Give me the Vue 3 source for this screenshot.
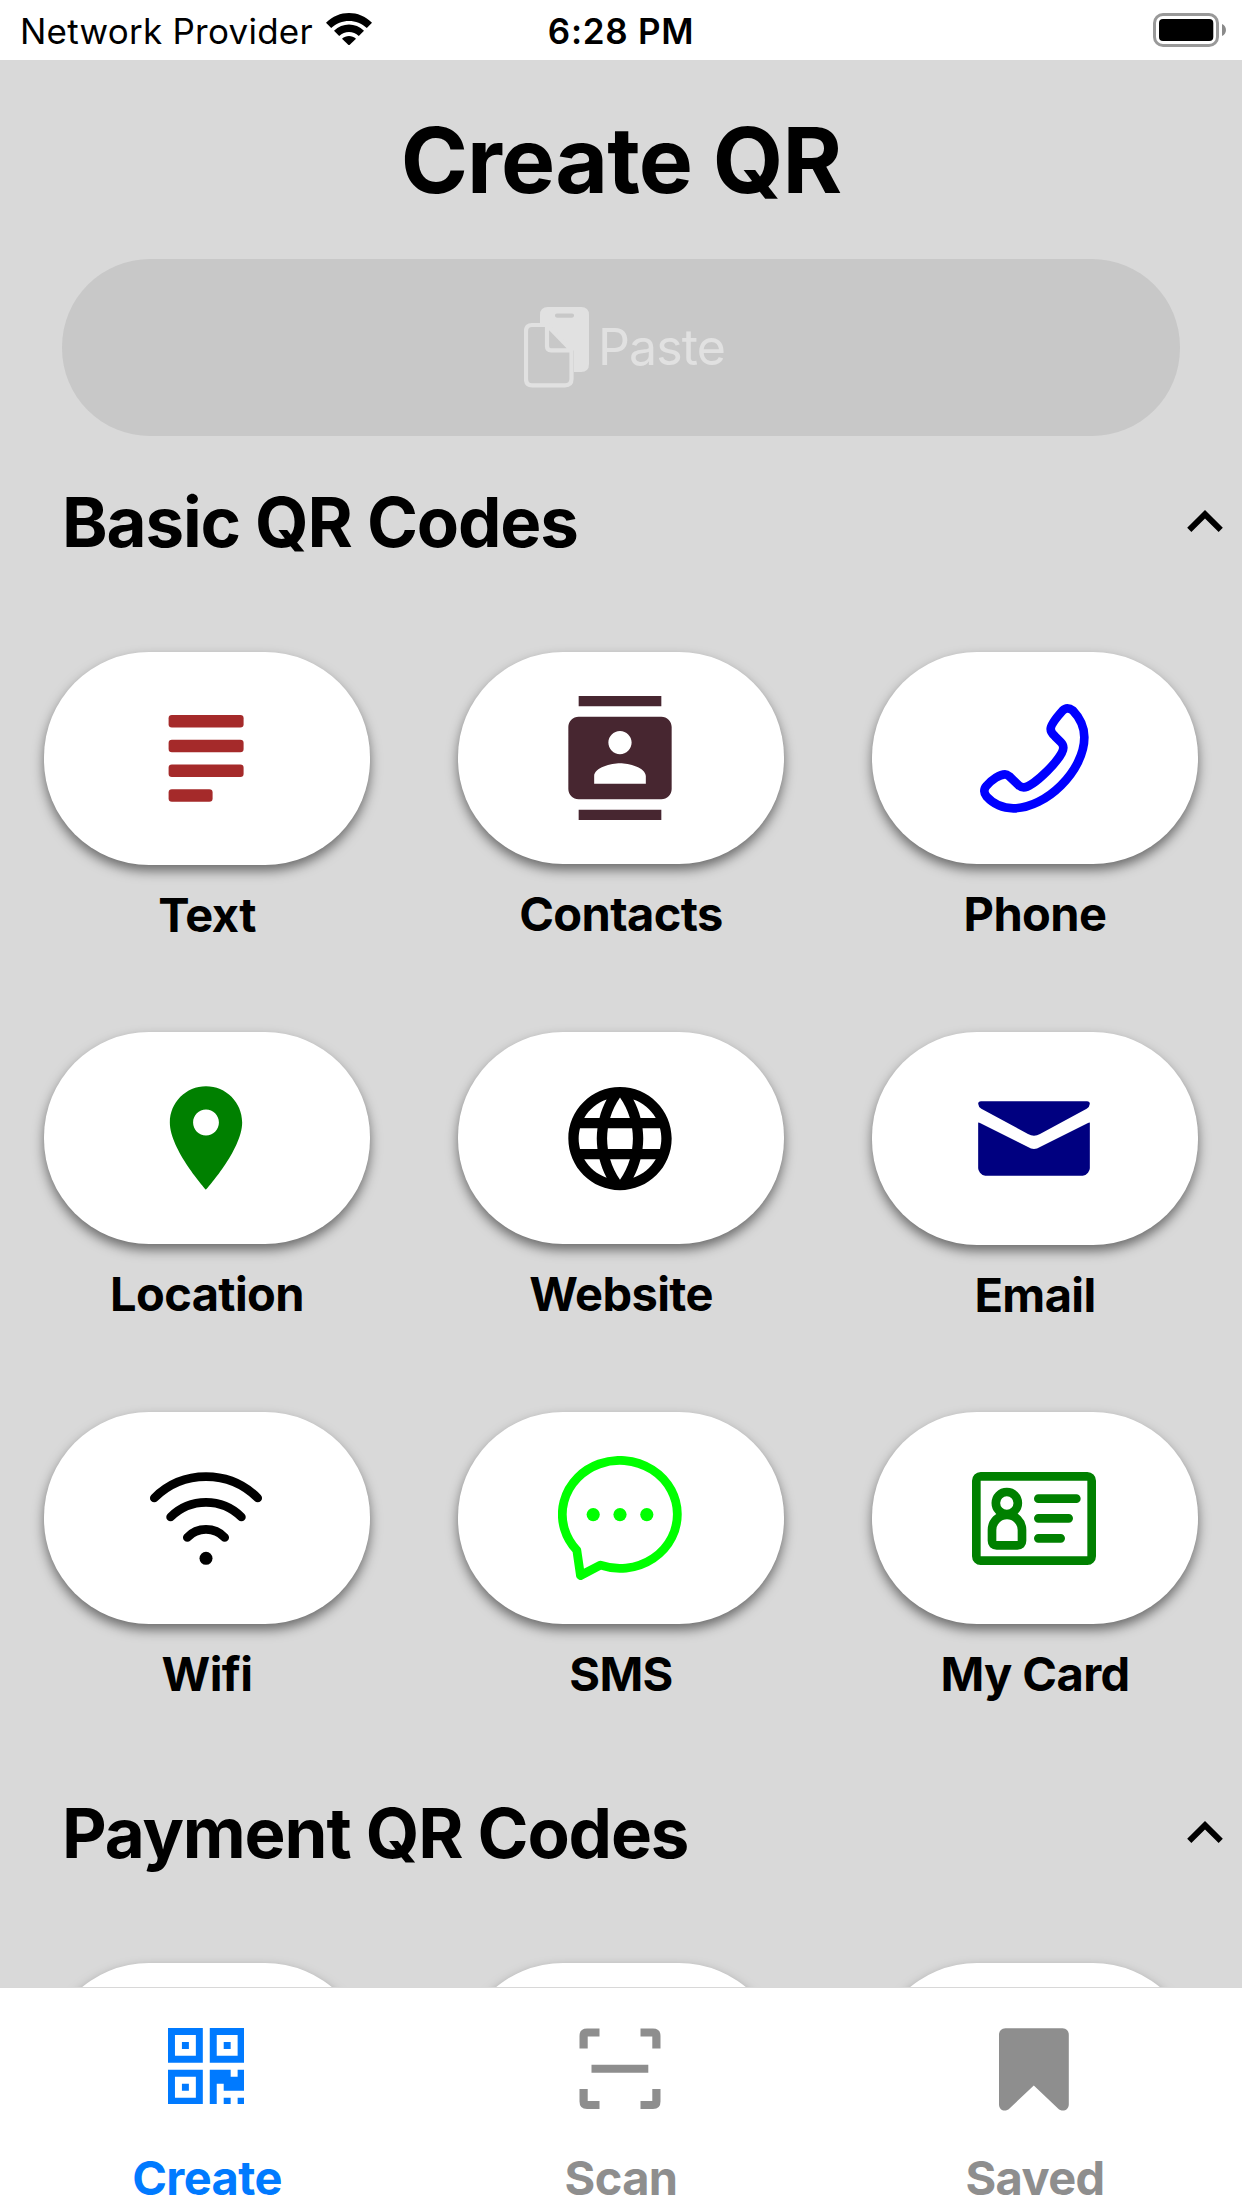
<script setup>
const basicItems = [
  { id: 'text', label: 'Text' },
  { id: 'contacts', label: 'Contacts' },
  { id: 'phone', label: 'Phone' },
  { id: 'location', label: 'Location' },
  { id: 'website', label: 'Website' },
  { id: 'email', label: 'Email' },
  { id: 'wifi', label: 'Wifi' },
  { id: 'sms', label: 'SMS' },
  { id: 'card', label: 'My Card' },
]
</script>

<template>
  <div class="screen">
    <header class="status">
      <div class="carrier">
        <span class="carrier-name">Network Provider</span>
        <svg class="signal" viewBox="0 0 46 32">
          <path d="M0 9.8C13-3.2 33-3.2 46 9.8L40.800 15C31 5.500 15 5.500 5.200 15Z" />
          <path d="M8 17.800C16.500 9.400 29.500 9.400 38 17.800L32.800 23C27.300 17.600 18.700 17.600 13.200 23Z" />
          <path d="M16 25.700C20 22 26 22 30 25.700L23 32.500Z" />
        </svg>
      </div>
      <div class="time">6:28 PM</div>
      <div class="battery-wrap">
        <svg class="battery" viewBox="0 0 74 34">
          <rect x="1.500" y="1.500" width="63" height="31" rx="8.500" fill="none" stroke="#999" stroke-width="3" />
          <rect x="6" y="6" width="54.300" height="22" rx="4" />
          <path d="M69 11C74.300 13 74.300 21 69 23Z" fill="#8a8a8a" />
        </svg>
      </div>
    </header>

    <main class="content">
      <h1 class="title">Create QR</h1>

      <button class="paste" type="button">
        <svg class="paste-icon" viewBox="0 0 65 81">
          <path fill-rule="evenodd" d="M24 0H57Q65 0 65 8V57Q65 65 57 65H50V44L25 19H16V8Q16 0 24 0ZM33 6.500A2 2 0 0 0 33 10.700H48A2 2 0 0 0 48 6.500Z" />
          <path d="M23 18H8Q2 18 2 24V72Q2 78.300 8 78.300H41Q47.500 78.300 47.500 72V43.300H27Q23 43.300 23 39.300ZM23 18L47.500 43.300" fill="none" stroke="#e1e1e1" stroke-width="4.200" />
        </svg>
        <span class="paste-label">Paste</span>
      </button>

      <div class="section-head">
        <h2 class="section-title">Basic QR Codes</h2>
        <svg class="chevron" viewBox="6 8 12 7.410"><path d="M12 8l-6 6 1.410 1.410L12 10.830l4.590 4.580L18 14z" /></svg>
      </div>

      <div class="grid">
        <div v-for="item in basicItems" :key="item.id" class="cell">
          <div class="pill" :class="{ tall: item.id === 'text' || item.id === 'email' }">
            <svg v-if="item.id === 'text'" class="icon" viewBox="0 0 124 124" fill="#a52a2a">
              <rect x="24.600" y="19" width="75" height="12.500" rx="3.300" />
              <rect x="24.600" y="43.800" width="75" height="12.500" rx="3.300" />
              <rect x="24.600" y="68.600" width="75" height="12.500" rx="3.300" />
              <rect x="24.600" y="93.300" width="44" height="12.500" rx="3.300" />
            </svg>
            <svg v-else-if="item.id === 'contacts'" class="icon" viewBox="0 0 24 24" fill="#472630">
              <path d="M20 0H4v2h16V0zM4 24h16v-2H4v2zM20 4H4c-1.1 0-2 .9-2 2v12c0 1.1.9 2 2 2h16c1.1 0 2-.9 2-2V6c0-1.1-.9-2-2-2zm-8 2.750c1.240 0 2.250 1.010 2.250 2.250s-1.010 2.250-2.250 2.250S9.750 10.240 9.750 9 10.760 6.750 12 6.750zM17 17H7v-1.500c0-1.670 3.330-2.500 5-2.500s5 .83 5 2.500V17z" />
            </svg>
            <svg v-else-if="item.id === 'phone'" class="icon" viewBox="396 228 372 372" fill="none" stroke="#00f" stroke-width="26">
              <path d="M682 265C676 265 672 268 668 272C650 292 632 315 632 327C632 336 636 341 645 349L662 366C668 372 670 376 670 383C670 412 580 502 551 502C546 502 541 500 536 496L508 469C503 465 500 463 495 463C480 463 456 478 439 498C434 503 433 508 433 514C433 520 435 524 440 530C462 554 490 565 520 565C618 565 733 452 733 352C733 320 719 293 698 271C693 267 688 265 682 265Z" />
            </svg>
            <svg v-else-if="item.id === 'location'" class="icon" viewBox="0 0 24 24" fill="#008000">
              <path d="M12 2C8.130 2 5 5.130 5 9c0 5.250 7 13 7 13s7-7.750 7-13c0-3.870-3.130-7-7-7zm0 9.500c-1.380 0-2.500-1.120-2.500-2.500s1.120-2.500 2.500-2.500 2.500 1.120 2.500 2.500-1.120 2.500-2.500 2.500z" />
            </svg>
            <svg v-else-if="item.id === 'website'" class="icon" viewBox="0 -0.120 24 24">
              <path d="M11.990 2C6.470 2 2 6.480 2 12s4.470 10 9.990 10C17.520 22 22 17.520 22 12S17.520 2 11.990 2zm6.930 6h-2.950c-.32-1.250-.78-2.450-1.380-3.560 1.840.63 3.370 1.910 4.330 3.560zM12 4.040c.83 1.200 1.480 2.530 1.910 3.960h-3.820c.43-1.430 1.080-2.760 1.910-3.960zM4.260 14C4.100 13.360 4 12.690 4 12s.1-1.360.26-2h3.380c-.08.66-.14 1.320-.14 2 0 .68.06 1.340.14 2H4.260zm.82 2h2.950c.32 1.250.78 2.450 1.380 3.560-1.840-.63-3.370-1.900-4.330-3.560zm2.950-8H5.080c.96-1.660 2.490-2.930 4.330-3.560C8.810 5.550 8.350 6.750 8.030 8zM12 19.960c-.83-1.200-1.480-2.530-1.910-3.960h3.820c-.43 1.430-1.080 2.760-1.910 3.960zM14.340 14H9.660c-.09-.66-.16-1.320-.16-2 0-.68.07-1.350.16-2h4.680c.09.65.16 1.320.16 2 0 .68-.07 1.340-.16 2zm.25 5.560c.6-1.110 1.060-2.310 1.380-3.560h2.950c-.96 1.650-2.490 2.930-4.330 3.560zM16.360 14c.08-.66.14-1.320.14-2 0-.68-.06-1.340-.14-2h3.380c.16.64.26 1.310.26 2s-.1 1.360-.26 2h-3.380z" />
            </svg>
            <svg v-else-if="item.id === 'email'" class="icon" viewBox="396 228 372 372" fill="#000080">
              <path d="M423 303.500H741Q749.500 303.500 749.500 311Q749 320 740 326L600 402Q582 413 564 402L424 326Q415 320 414.500 311Q414.500 303.500 423 303.500Z" />
              <path d="M414.500 368Q416 367 420 369L564 441Q582 453 600 441L744 369Q748 367 749.500 368V505Q749.500 512 744 518Q736 527.500 728 527.500H436Q428 527.500 420 518Q414.500 512 414.500 505Z" />
            </svg>
            <svg v-else-if="item.id === 'wifi'" class="icon" viewBox="0 0 124 124" fill="none" stroke="#000" stroke-width="8.700" stroke-linecap="round">
              <path d="M10.300 42A73.400 73.400 0 0 1 113.700 42M26.600 61A50.200 50.200 0 0 1 97.400 61M43.300 81.400A26 26 0 0 1 80.700 81.400" />
              <circle cx="62" cy="102.300" r="6.500" fill="#000" stroke="none" />
            </svg>
            <svg v-else-if="item.id === 'sms'" class="icon" viewBox="0 0 124 124" fill="none" stroke="#0f0" stroke-width="8.800" stroke-linejoin="round">
              <path d="M18.800 94.200A57.500 54 0 1 1 42.400 109.200L22.500 119.500Z" />
              <g fill="#0f0" stroke="none">
                <circle cx="35.200" cy="58.600" r="6.600" />
                <circle cx="62" cy="58.600" r="6.600" />
                <circle cx="88.800" cy="58.600" r="6.600" />
              </g>
            </svg>
            <svg v-else class="icon" viewBox="396 228 372 372" fill="none" stroke="#008000" stroke-width="26" stroke-linecap="round">
              <rect x="409" y="289" width="346" height="253" rx="13" />
              <circle cx="500.500" cy="369" r="33" />
              <path d="M456 450A45 45 0 0 1 546 450V482Q546 496 532 496H470Q456 496 456 482Z" />
              <path d="M595 356H709M595 415H686M595 475H662" />
            </svg>
          </div>
          <div class="label">{{ item.label }}</div>
        </div>
      </div>

      <div class="section-head">
        <h2 class="section-title">Payment QR Codes</h2>
        <svg class="chevron" viewBox="6 8 12 7.410"><path d="M12 8l-6 6 1.410 1.410L12 10.830l4.590 4.580L18 14z" /></svg>
      </div>

      <div class="grid">
        <div v-for="n in 3" :key="n" class="cell"><div class="pill"></div></div>
      </div>
    </main>

    <nav class="tabs">
      <div class="tab active">
        <div class="tab-icon">
          <svg width="76.600" height="76.600" viewBox="0 0 11 11" fill="#007aff">
            <path fill-rule="evenodd" d="M0 0H5V5H0ZM1 1V4H4V1ZM2 2H3V3H2ZM6 0H11V5H6ZM7 1V4H10V1ZM8 2H9V3H8ZM0 6H5V11H0ZM1 7V10H4V7ZM2 8H3V9H2ZM6 6H9V7H10V6H11V9H8V8H7V11H6ZM8 10H9V11H8ZM10 10H11V11H10Z" />
          </svg>
        </div>
        <span class="tab-label">Create</span>
      </div>
      <div class="tab">
        <div class="tab-icon">
          <svg width="82" height="82" viewBox="0 0 82 82" fill="#8e8e8e">
            <path d="M0.500 20.500V8Q0.500 0.500 8 0.500H20.500V8.500H8.700V20.500ZM61.500 0.500H74Q81.500 0.500 81.500 8V20.500H73.300V8.500H61.500ZM0.500 61V73.500Q0.500 81 8 81H20.500V73H8.700V61ZM61.500 81H74Q81.500 81 81.500 73.500V61H73.300V73H61.500ZM12.500 36.700H69.300V44.800H12.500Z" />
          </svg>
        </div>
        <span class="tab-label">Scan</span>
      </div>
      <div class="tab">
        <div class="tab-icon">
          <svg width="70" height="83" viewBox="0 0 70 83" fill="#8e8e8e">
            <path d="M6.500 0.300H63.500Q69.800 0.800 69.800 6.800V76.500C69.800 82.500 63 84.500 59 80.500L34.800 57.500L10.500 80.500C6.500 84.500 0 82.500 0 76.500V6.800Q0 0.800 6.500 0.300Z" />
          </svg>
        </div>
        <span class="tab-label">Saved</span>
      </div>
    </nav>
  </div>
</template>

<style>
body {
  margin: 0;
}
</style>

<style scoped>
.screen {
  width: 1242px;
  height: 2208px;
  display: flex;
  flex-direction: column;
  overflow: hidden;
  background: #d9d9d9;
  color: #000;
  font-family: Inter, "Liberation Sans", sans-serif;
}
.status {
  height: 60px;
  flex: none;
  display: grid;
  grid-template-columns: 1fr auto 1fr;
  background: #fff;
  font-size: 35px;
  line-height: 62px;
}
.carrier {
  display: flex;
  padding-left: 20px;
}
.carrier-name {
  width: 306px;
  letter-spacing: 0.25px;
  white-space: nowrap;
}
.signal {
  width: 46px;
  height: 32px;
  margin-top: 13px;
}
.time {
  font-weight: 600;
  letter-spacing: 0.7px;
}
.battery-wrap {
  display: flex;
  justify-content: flex-end;
  padding: 13px 15px 0 0;
}
.battery {
  width: 74px;
  height: 34px;
}
.content {
  flex: 1;
  min-height: 0;
  overflow: hidden;
}
.title {
  margin: 44px 0 43px;
  font-size: 91px;
  line-height: 112px;
  font-weight: 700;
  letter-spacing: -0.9px;
  text-align: center;
}
.paste {
  display: flex;
  align-items: flex-start;
  width: 1118px;
  height: 177px;
  margin: 0 0 44px 62px;
  padding: 48px 0 0 462px;
  border: 0;
  border-radius: 88px;
  background: #c8c8c8;
  color: #e1e1e1;
  font: 400 50px/62px Inter, "Liberation Sans", sans-serif;
  letter-spacing: -0.9px;
}
.paste-icon {
  width: 65px;
  height: 81px;
  fill: #e1e1e1;
}
.paste-label {
  margin: 9px 0 0 9px;
}
.section-head {
  display: flex;
  justify-content: space-between;
  height: 84px;
  margin-bottom: 88px;
  padding: 0 19px 0 62px;
}
.section-title {
  margin: 0;
  font-size: 69px;
  line-height: 84px;
  font-weight: 700;
  letter-spacing: -1.15px;
  white-space: nowrap;
}
.chevron {
  width: 36px;
  height: 22px;
  margin-top: 30px;
}
.grid {
  display: grid;
  grid-template-columns: repeat(3, 414px);
  grid-auto-rows: 380px;
  height: 1139px;
}
.cell {
  display: flex;
  flex-direction: column;
  align-items: center;
}
.pill {
  display: flex;
  justify-content: center;
  width: 326px;
  height: 212px;
  flex: none;
  border-radius: 105px;
  background: #fff;
  box-shadow: 0 6px 12px rgba(0, 0, 0, 0.5);
}
.pill.tall {
  height: 213px;
}
.icon {
  width: 124px;
  height: 124px;
  margin: 44px 2px 0 0;
}
.label {
  margin-top: 22px;
  font-size: 47px;
  line-height: 56px;
  font-weight: 700;
  letter-spacing: -0.6px;
  white-space: nowrap;
}
.tabs {
  flex: none;
  display: grid;
  grid-template-columns: repeat(3, 414px);
  height: 220px;
  border-top: 1px solid #d8d8d8;
  background: #fff;
}
.tab {
  display: flex;
  flex-direction: column;
  align-items: center;
  color: #8e8e8e;
}
.tab.active {
  color: #007aff;
}
.tab-icon {
  height: 83px;
  margin: 39.700px 2px 0 0;
}
.tab-icon svg {
  display: block;
}
.tab-label {
  margin-top: 39.300px;
  font-size: 47px;
  line-height: 56px;
  font-weight: 700;
  letter-spacing: -0.6px;
}
</style>
